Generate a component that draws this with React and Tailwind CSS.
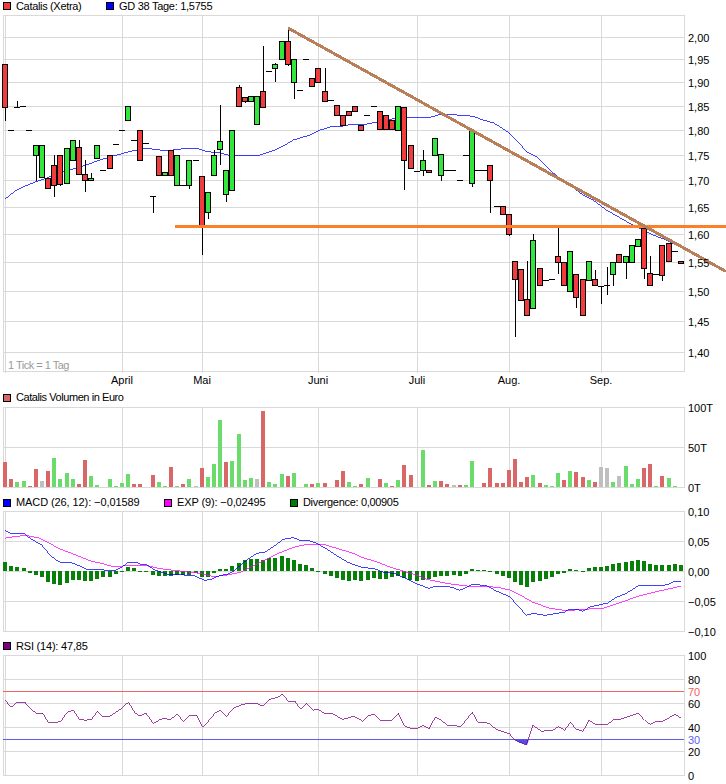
import React from "react";

const R = "#f03c3c";
const G = "#33e63c";

// page pixels: every svg below uses a viewBox in page coordinates
const MONTHS = [[122, "April"], [202, "Mai"], [318, "Juni"], [417, "Juli"], [509, "Aug."], [601, "Sep."]];
const VLINES = [3, 5, 122, 202, 318, 417, 509, 601, 684];

// [x, top, bottom, colour, wickTop, wickBottom]; "d" = dash only
const candles = [
  [5,64,107,"r",64,121],[17,107,107,"d",101,107],[23,106,106,"d"],[11,130,130,"d"],[29,130,130,"d"],
  [36,145,155,"g",145,181],[42,145,177,"g"],[48,178,188,"r"],[54,165,185,"r",155,197],[60,155,184,"r",155,186],
  [67,148,183,"g"],[73,140,160,"g"],[79,147,174,"r",140,174],[85,174,180,"r",160,192],[91,178,180,"g",173,180],
  [97,145,158,"g"],[103,170,170,"d"],[110,155,168,"r"],[116,144,144,"d"],[122,130,130,"d"],[128,106,120,"g"],
  [134,140,140,"d"],[140,130,160,"r"],[146,143,143,"d"],[153,196,196,"d",196,213],[159,156,175,"r"],
  [165,172,175,"g"],[171,150,175,"r"],[177,155,185,"g"],[183,185,185,"d"],[189,160,185,"g",160,189],
  [196,160,160,"d"],[202,176,225,"r",176,255],[208,192,212,"g",192,219],[214,155,175,"g",150,175],
  [220,141,149,"g",105,165],[226,170,194,"g",170,202],[232,130,190,"g"],[239,87,106,"r",85,106],
  [245,97,101,"r",97,103],[251,96,101,"g"],[257,96,124,"g"],[263,91,107,"r",46,107],[269,71,71,"d"],
  [275,64,68,"g",63,82],[282,41,59,"g"],[288,41,64,"r",28,66],[294,59,82,"g",59,99],[300,90,90,"d"],
  [306,59,59,"d"],[312,78,86,"r"],[318,68,82,"r"],[325,91,101,"r",68,101],[331,100,100,"d"],
  [337,105,115,"r"],[343,115,125,"r"],[349,111,115,"r"],[355,106,111,"r"],[361,125,130,"r"],
  [367,115,115,"d"],[374,106,106,"d"],[380,111,129,"r"],[386,115,129,"r"],[392,120,129,"r"],[398,106,130,"g"],
  [404,107,160,"r",107,190],[411,145,168,"r"],[417,171,171,"d"],[423,160,170,"g",150,176],[429,170,172,"r"],
  [435,138,155,"g"],[441,154,175,"g",154,181],[447,170,170,"d"],[453,170,170,"d"],[460,180,180,"d"],
  [466,155,155,"d"],[472,130,183,"g",130,187],[478,170,170,"d"],[484,170,170,"d"],[490,165,180,"r",165,213],
  [497,206,206,"d"],[503,206,214,"r"],[509,214,234,"r",214,236],[515,261,279,"r",261,337],[521,269,300,"r"],
  [527,299,315,"r",261,315],[533,240,308,"g",234,309],[540,268,285,"r"],[546,280,280,"d"],[552,279,279,"d"],
  [558,256,262,"r",228,274],[564,262,285,"r"],[570,251,291,"g"],[576,274,297,"r",274,308],[583,279,315,"r"],
  [589,261,280,"g"],[595,279,285,"r",270,285],[601,286,286,"d",286,304],[607,285,285,"d",267,295],
  [613,262,274,"g",262,286],[619,254,262,"r"],[626,256,262,"g",256,279],[632,245,262,"g"],[638,239,246,"g"],
  [644,228,268,"r",228,279],[650,273,285,"r",256,285],[656,274,274,"d"],[662,245,275,"r",245,281],
  [669,243,261,"r"],[675,251,251,"d"],[681,261,263,"r"],
];

const volumes = [
  [5,"r",25],[11,"r",8],[17,"g",5],[24,"g",6],[30,"r",1],[36,"r",18],[42,"k",6],[48,"r",16],[54,"g",29],[60,"g",8],
  [67,"g",14],[73,"g",8],[79,"r",3],[85,"r",27],[91,"g",11],[97,"g",2],[110,"g",8],[116,"g",1],[122,"g",4],[128,"g",13],
  [134,"r",3],[140,"r",3],[153,"r",12],[159,"g",5],[165,"g",1],[171,"r",20],[177,"g",1],[183,"r",3],[189,"g",8],[196,"k",1],
  [202,"r",19],[208,"g",10],[214,"g",23],[220,"g",67],[226,"r",25],[232,"g",26],[239,"g",53],[245,"g",7],[251,"g",9],[257,"k",8],
  [263,"r",76],[269,"g",5],[275,"g",3],[282,"g",13],[288,"r",11],[294,"g",14],[306,"g",3],[312,"r",3],[318,"g",4],[325,"r",4],
  [337,"r",7],[343,"r",16],[349,"g",5],[355,"g",1],[361,"r",3],[368,"g",9],[380,"r",8],[386,"g",4],[392,"r",1],[398,"g",7],
  [404,"r",22],[411,"r",12],[423,"g",37],[429,"r",2],[435,"g",6],[441,"r",6],[447,"r",3],[454,"k",2],[460,"r",2],[466,"g",2],
  [472,"g",26],[484,"r",4],[490,"r",19],[497,"r",4],[503,"r",4],[509,"r",17],[515,"r",28],[521,"r",5],[527,"r",10],[533,"g",12],
  [540,"r",4],[546,"g",2],[552,"g",1],[558,"g",14],[564,"r",7],[570,"g",16],[576,"r",15],[583,"r",10],[589,"g",7],[595,"r",5],
  [601,"k",20],[607,"k",19],[613,"g",5],[619,"k",11],[626,"g",21],[632,"g",3],[638,"g",8],[644,"r",19],[650,"r",23],[656,"g",1],
  [662,"r",11],[669,"g",9],[675,"g",1],
];
const VOL_COLORS = { r: "#d96767", g: "#6bdc6b", k: "#bfbfbf" };

// [x, height above (+) or below (-) the zero line]
const histogram = [
  [5,9],[11,5],[17,4],[24,3],[30,-2],[36,-4],[42,-6],[48,-11],[54,-13],[60,-14],[67,-12],[73,-9],[79,-9],[85,-10],[91,-10],
  [97,-8],[103,-6],[110,-6],[116,-3],[122,-1],[128,4],[134,3],[140,-1],[146,-1],[153,-4],[159,-5],[165,-5],[171,-5],[177,-4],
  [183,-4],[189,-4],[196,-2],[202,-6],[208,-6],[214,-2],[220,2],[226,2],[232,5],[239,8],[245,11],[251,12],[257,12],[263,11],
  [269,13],[275,13],[282,15],[288,13],[294,11],[300,7],[306,6],[312,3],[318,-1],[325,-3],[331,-5],[337,-7],[343,-9],[349,-10],
  [355,-9],[361,-10],[368,-9],[374,-7],[380,-8],[386,-8],[392,-6],[398,-5],[404,-7],[410,-9],[417,-10],[423,-9],[429,-8],
  [435,-6],[441,-5],[447,-5],[454,-4],[460,-5],[466,-3],[472,2],[478,1],[484,1],[490,-1],[497,-3],[503,-5],[509,-7],[515,-11],
  [521,-14],[527,-16],[533,-11],[540,-10],[546,-8],[552,-6],[558,-3],[564,-2],[570,2],[576,1],[583,-1],[589,3],[595,4],[601,4],
  [607,5],[613,7],[619,8],[626,9],[632,10],[638,11],[644,10],[650,7],[656,6],[662,6],[669,6],[675,7],[681,6],
];

// traced in 3x crop coordinates, so they carry the crop's origin
const trace = (ox, oy, list) => list.map(([x, y]) => `${(ox + x / 3).toFixed(1)},${(oy + y / 3).toFixed(1)}`).join(" ");

const gd38 = [
  trace(0, 0, [[15,597],[30,585],[50,570],[70,560],[100,548],[130,538],[150,530],[170,520],[210,510],[250,498],[300,480],[350,465],[400,452],[440,445],[480,450],[520,450],[560,445],[590,445],[620,455],[660,458],[690,467],[720,467],[780,465],[820,452],[860,432],[880,420],[930,405],[955,392],[990,381],[1030,378],[1060,372],[1089,375]]),
  trace(363, 0, [[30,368],[60,365],[100,353],[130,352],[200,352],[230,344],[260,344],[300,346],[330,349],[360,360],[390,368],[410,380],[440,400],[470,430],[490,455],[520,470],[560,510],[600,543],[620,555],[660,585],[690,600]]),
  trace(363, 180, [[730,90],[800,130],[830,145],[870,165],[910,180],[940,195]]),
].join(" ");

const macd = [
  trace(0, 490, [[15,121],[30,130],[72,130],[90,145],[125,165],[150,195],[170,212],[190,219],[215,218],[240,228],[265,240],[290,238],[340,243],[365,232],[385,217],[410,217],[425,224],[440,224],[465,240],[505,253],[540,253],[555,256],[580,256],[600,265],[615,271],[635,268],[660,256],[680,254],[700,244],[740,210],[770,190],[795,186],[820,170],[850,148],[880,143],[900,151],[920,150],[950,160],[985,180],[1020,203],[1040,215],[1065,225],[1089,233]]),
  trace(363, 490, [[30,235],[60,246],[100,252],[120,262],[165,283],[198,295],[220,288],[250,289],[270,293],[290,301],[310,292],[330,283],[370,287],[400,303],[440,320],[490,376],[510,370],[545,376],[570,372],[605,366],[620,357],[640,358],[660,364],[680,351],[735,339],[760,322],[790,310],[825,288],[850,287],[880,288],[915,284],[935,274],[955,274]]),
].join(" ");

const exp9 = [
  trace(0, 490, [[15,145],[30,142],[75,136],[120,145],[145,158],[180,177],[210,188],[240,200],[275,214],[300,219],[340,230],[380,227],[440,227],[480,236],[540,243],[600,250],[640,260],[680,255],[720,247],[750,232],[790,212],[840,188],[880,172],[920,163],[970,163],[1020,178],[1060,190],[1089,203]]),
  trace(363, 490, [[40,215],[80,231],[120,243],[160,255],[190,268],[230,276],[270,283],[320,289],[370,289],[410,293],[440,300],[480,320],[510,337],[560,355],[610,362],[660,358],[720,355],[780,335],[830,317],[880,305],[920,296],[955,288]]),
].join(" ");

const rsi = [
  trace(0, 634, [[15,198],[33,220],[52,205],[75,205],[92,226],[108,237],[128,238],[145,265],[170,265],[183,261],[200,236],[220,228],[238,255],[255,259],[275,256],[292,232],[310,249],[330,247],[365,223],[385,205],[405,236],[420,246],[438,238],[460,268],[480,257],[490,254],[512,256],[532,241],[550,262],[570,243],[590,243],[608,280],[625,262],[645,238],[660,229],[680,247],[700,223],[725,212],[745,208],[770,208],[790,217],[808,196],[830,191],[848,181],[865,202],[885,202],[902,226],[920,208],[938,229],[955,226],[975,240],[995,238],[1028,256],[1062,247],[1089,262]]),
  trace(363, 634, [[15,245],[33,241],[52,259],[88,259],[106,238],[125,277],[145,283],[163,283],[180,274],[198,284],[217,250],[235,259],[252,273],[275,273],[292,280],[328,235],[345,265],[365,265],[380,270],[400,286],[440,300],[455,318],[490,333],[510,274],[535,292],[570,288],[587,278],[605,289],[622,265],[640,286],[660,292],[678,259],[697,271],[735,271],[752,256],[770,256],[825,238],[845,259],[862,271],[880,262],[900,262],[935,241],[955,253]]),
].join(" ");

function Legend({ items, className }) {
  return (
    <div className={`relative flex items-center ${className}`}>
      {items.map(([color, label, tracking, width]) => (
        <div key={label} className="flex items-center" style={{ width }}>
          <span className="ml-[3px] mr-[5px] h-[8px] w-[8px] border border-black" style={{ background: color }} />
          <span className={`whitespace-nowrap ${tracking}`}>{label}</span>
        </div>
      ))}
    </div>
  );
}

function Curve({ points, color }) {
  return <polyline points={points} fill="none" stroke={color} strokeWidth="0.75" shapeRendering="crispEdges" />;
}

function Plot({ top, height, lines, bottom, children, labels }) {
  return (
    <svg
      viewBox={`0 ${top} 726 ${height}`}
      width="726"
      height={height}
      className="block overflow-visible"
    >
      <g stroke="#d9d9d9" shapeRendering="crispEdges">
        {VLINES.map((x) => (
          <line key={x} x1={x + 0.5} x2={x + 0.5} y1={top + 0.5} y2={bottom + 0.5} />
        ))}
        {lines.map((y) => (
          <line key={y} x1="3" x2="685" y1={y + 0.5} y2={y + 0.5} />
        ))}
      </g>
      {children}
      {labels.map(([y, text, color]) => (
        <text key={text} x="688" y={y + 4} fill={color || "#000"}>
          {text}
        </text>
      ))}
    </svg>
  );
}

function Candle({ c }) {
  const [x, top, bottom, kind, wickTop, wickBottom] = c;
  const wick = wickTop !== undefined;
  return (
    <g shapeRendering="crispEdges" stroke="#000">
      {wick && <line x1={x + 0.5} x2={x + 0.5} y1={wickTop} y2={wickBottom} />}
      {kind === "d" ? (
        <line x1={x - 3} x2={x + 3} y1={top + 0.5} y2={top + 0.5} />
      ) : (
        <rect x={x - 2.5} y={top + 0.5} width="5" height={bottom - top} fill={kind === "r" ? R : G} />
      )}
    </g>
  );
}

export default function App() {
  return (
    <div className="h-[784px] w-[726px] overflow-hidden bg-white font-['Liberation_Sans',Arial,sans-serif] text-[11px] leading-none text-black">
      <Legend
        className="h-[15px] pb-[3px]"
        items={[
          [R, "Catalis (Xetra)", "tracking-[-0.33px]", 103],
          ["#0000ff", "GD 38 Tage: 1,5755", "tracking-[-0.28px]"],
        ]}
      />
      <Plot
        top={15}
        height={373}
        bottom={371}
        lines={[15, 37, 59, 82, 106, 130, 155, 180, 207, 234, 262, 291, 321, 352, 371]}
        labels={[
          [38, "2,00"], [60, "1,95"], [83, "1,90"], [107, "1,85"], [131, "1,80"], [156, "1,75"], [181, "1,70"],
          [208, "1,65"], [235, "1,60"], [263, "1,55"], [292, "1,50"], [322, "1,45"], [353, "1,40"],
        ]}
      >
        {VLINES.slice(1, -1).map((x) => (
          <line key={x} x1={x + 0.5} x2={x + 0.5} y1="371" y2="373" stroke="#d9d9d9" shapeRendering="crispEdges" />
        ))}
        <Curve points={gd38} color="#0000ff" />
        {candles.map((c, i) => (
          <Candle key={i} c={c} />
        ))}
        <line x1="175" x2="726" y1="226.5" y2="226.5" stroke="#fb8029" strokeWidth="3" shapeRendering="crispEdges" />
        <line x1="288" x2="726" y1="28" y2="271.5" stroke="#b97f58" strokeWidth="3" shapeRendering="crispEdges" />
        <text x="8" y="369" fill="#9a9a9a" className="tracking-[-0.5px]">1 Tick = 1 Tag</text>
        {MONTHS.map(([x, name]) => (
          <text key={name} x={x} y="384" textAnchor="middle">
            {name}
          </text>
        ))}
      </Plot>

      <Legend className="h-[19px]" items={[["#d96767", "Catalis Volumen in Euro", "tracking-[-0.43px]"]]} />
      <Plot
        top={407}
        height={87}
        bottom={487}
        lines={[407, 447, 487]}
        labels={[[408, "100T"], [448, "50T"], [488, "0T"]]}
      >
        {volumes.map(([x, kind, h]) => (
          <rect key={x} x={x - 2} y={487 - h} width="4" height={h} fill={VOL_COLORS[kind]} shapeRendering="crispEdges" />
        ))}
      </Plot>

      <Legend
        className="h-[17px]"
        items={[
          ["#0000ff", "MACD (26, 12): −0,01589", "tracking-[-0.09px]", 161],
          ["#ff00ff", "EXP (9): −0,02495", "tracking-[-0.12px]", 126],
          ["#007c00", "Divergence: 0,00905", "tracking-[-0.32px]"],
        ]}
      />
      <Plot
        top={511}
        height={126}
        bottom={631}
        lines={[511, 541, 571, 601, 631]}
        labels={[[512, "0,10"], [542, "0,05"], [572, "0,00"], [602, "−0,05"], [632, "−0,10"]]}
      >
        {histogram.map(([x, h]) => (
          <rect
            key={x}
            x={x - 2}
            y={h > 0 ? 571 - h : 571}
            width="4"
            height={Math.abs(h)}
            fill="#087f08"
            shapeRendering="crispEdges"
          />
        ))}
        <Curve points={exp9} color="#ff00ff" />
        <Curve points={macd} color="#0000ff" />
      </Plot>

      <Legend className="h-[18px]" items={[["#800080", "RSI (14): 47,85", "tracking-[-0.2px]"]]} />
      <Plot
        top={655}
        height={129}
        bottom={775}
        lines={[655, 679, 703, 727, 751, 775]}
        labels={[
          [656, "100"], [680, "80"], [692, "70", "#f06060"], [704, "60"], [728, "40"],
          [740, "30", "#6060f0"], [752, "20"], [776, "0"],
        ]}
      >
        <g shapeRendering="crispEdges">
          <line x1="3" x2="684" y1="691.5" y2="691.5" stroke="#f06464" />
          <line x1="3" x2="684" y1="739.5" y2="739.5" stroke="#6060e6" />
        </g>
        <polygon points={trace(363, 634, [[452,316],[498,316],[492,333],[470,326]])} fill="#5050e6" />
        <Curve points={rsi} color="#800080" />
      </Plot>
    </div>
  );
}
